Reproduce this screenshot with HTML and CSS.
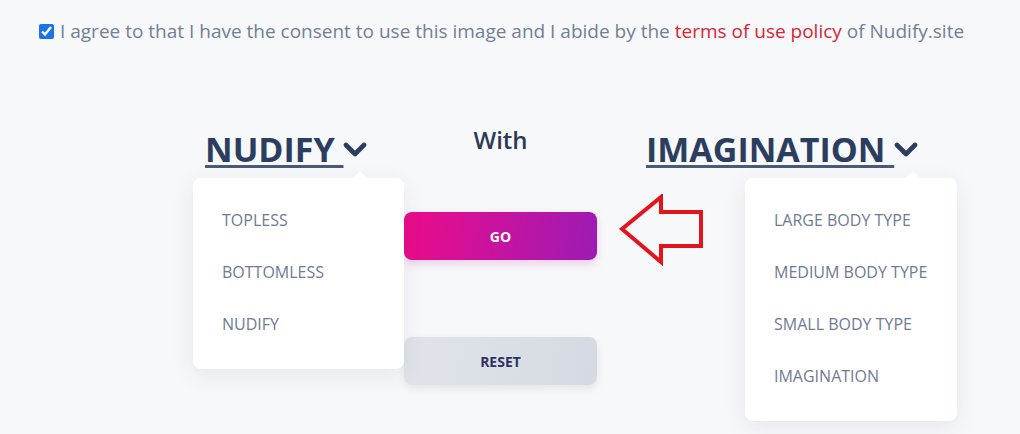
FILE: index.html
```html
<!DOCTYPE html>
<html lang="en">
<head>
<meta charset="utf-8">
<title>Nudify</title>
<link rel="stylesheet" href="styles.css">
</head>
<body>
<div class="consent">
  <input type="checkbox" class="consent-box" checked>
  <span class="consent-text">I agree to that I have the consent to use this image and I abide by the <a href="#" class="terms">terms of use policy</a> of Nudify.site</span>
</div>

<div class="row">
  <div class="col col-left">
    <div class="heading"><span class="heading-text">NUDIFY </span><svg class="chev" width="24" height="16" viewBox="0 0 24 16"><polyline points="3,3 12,12 21,3" fill="none" stroke="#2c3e5f" stroke-width="4.6" stroke-linejoin="round" stroke-linecap="round"/></svg></div>
    <ul class="dropdown">
      <li>TOPLESS</li>
      <li>BOTTOMLESS</li>
      <li>NUDIFY</li>
    </ul>
  </div>

  <div class="col col-mid">
    <div class="with">With</div>
    <button class="btn btn-go">GO</button>
    <button class="btn btn-reset">RESET</button>
  </div>

  <div class="col col-right">
    <div class="heading"><span class="heading-text">IMAGINATION </span><svg class="chev" width="24" height="16" viewBox="0 0 24 16"><polyline points="3,3 12,12 21,3" fill="none" stroke="#2c3e5f" stroke-width="4.6" stroke-linejoin="round" stroke-linecap="round"/></svg></div>
    <div class="right-body">
      <svg class="arrow" width="86" height="72" viewBox="0 0 86 72"><polygon points="3,35 42,3 42,18 82,18 82,52 42,52 42,68" fill="none" stroke="#e4141b" stroke-width="4" stroke-linejoin="miter"/></svg>
      <ul class="dropdown">
        <li>LARGE BODY TYPE</li>
        <li>MEDIUM BODY TYPE</li>
        <li>SMALL BODY TYPE</li>
        <li>IMAGINATION</li>
      </ul>
    </div>
  </div>
</div>
</body>
</html>
```

FILE: styles.css
```css
* { box-sizing: border-box; }

body {
  margin: 0;
  background: #f7f8fa;
  font-family: "Open Sans", "Liberation Sans", sans-serif;
  width: 1020px;
  height: 434px;
  overflow: hidden;
}

.consent {
  display: flex;
  align-items: center;
  padding: 19px 0 0 38px;
  height: 43px;
}

.consent-box {
  width: 15px;
  height: 15px;
  margin: 0 6px 0 1px;
  accent-color: #1a73e8;
}

.consent-text {
  font-size: 19px;
  line-height: 24px;
  color: #718096;
  white-space: nowrap;
}

.terms {
  color: #dc2434;
  text-decoration: none;
}

.row {
  display: flex;
  align-items: flex-start;
  margin: 84px 0 0 193px;
}

.col-left { width: 211px; }
.col-mid { width: 193px; display: flex; flex-direction: column; }
.col-right { width: 360px; }

.heading {
  display: flex;
  align-items: center;
  font-size: 34px;
  line-height: 44px;
  font-weight: 700;
  color: #2c3e5f;
  white-space: pre;
}

.col-left .heading { padding-left: 12px; }
.col-right .heading { padding-left: 49px; }

.heading-text {
  text-decoration: underline;
  text-decoration-thickness: 3px;
  text-underline-offset: 3px;
  text-decoration-color: #4a5a7c;
}

.chev {
  margin-left: 0;
  margin-top: 2px;
}

.dropdown {
  position: relative;
  list-style: none;
  margin: 7px 0 0 0;
  padding: 16px 0 19px 29px;
  width: 211px;
  background: #fff;
  border-radius: 8px;
  box-shadow: 0 6px 22px rgba(40, 50, 80, 0.09);
}

.dropdown::before {
  content: "";
  position: absolute;
  top: -7px;
  right: 36px;
  border-left: 8px solid transparent;
  border-right: 8px solid transparent;
  border-bottom: 8px solid #fff;
}

.dropdown li {
  font-size: 16px;
  line-height: 24px;
  padding: 14px 0;
  color: #6e7b92;
}

.with {
  text-align: center;
  font-size: 24px;
  line-height: 26px;
  font-weight: 600;
  color: #2c3a57;
}

.btn {
  width: 193px;
  height: 48px;
  border: none;
  border-radius: 8px;
  font-family: "Open Sans", "Liberation Sans", sans-serif;
  font-size: 14px;
  font-weight: 700;
  cursor: pointer;
}

.btn-go {
  margin-top: 59px;
  color: #fff;
  background: linear-gradient(100deg, #ec0b87 0%, #c613a0 50%, #9b1bb4 100%);
  box-shadow: 0 4px 10px rgba(180, 20, 140, 0.18);
}

.btn-reset {
  margin-top: 77px;
  color: #2f3260;
  background: linear-gradient(100deg, #e0e4ea 0%, #d5dae2 100%);
  box-shadow: 0 4px 8px rgba(0, 0, 0, 0.08);
}

.right-body {
  display: flex;
  align-items: flex-start;
}

.arrow {
  margin: 23px 0 0 22px;
  flex: none;
}

.right-body .dropdown {
  margin-left: 40px;
  width: 212px;
}
```
